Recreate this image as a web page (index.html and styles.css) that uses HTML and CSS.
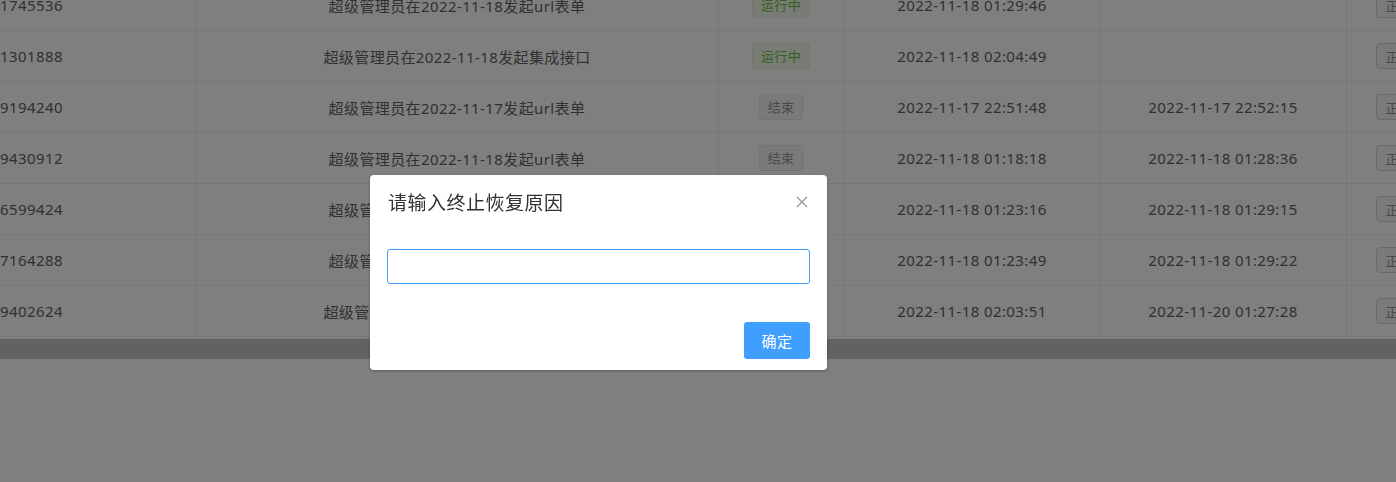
FILE: index.html
```html
<!DOCTYPE html>
<html lang="zh-CN">
<head>
    <meta charset="UTF-8">
    <title>流程列表</title>
    <link rel="stylesheet" href="styles.css">
</head>
<body>
    <div class="table-wrap">
        <table class="list-table">
            <colgroup>
                <col class="c-id"><col class="c-title"><col class="c-state"><col class="c-start"><col class="c-end"><col class="c-op">
            </colgroup>
            <tbody>
                <tr>
                    <td class="id">1745536</td>
                    <td>超级管理员在2022-11-18发起url表单</td>
                    <td><span class="tag tag-run">运行中</span></td>
                    <td>2022-11-18 01:29:46</td>
                    <td></td>
                    <td class="op"><button class="op-btn">正常</button></td>
                </tr>
                <tr>
                    <td class="id">1301888</td>
                    <td>超级管理员在2022-11-18发起集成接口</td>
                    <td><span class="tag tag-run">运行中</span></td>
                    <td>2022-11-18 02:04:49</td>
                    <td></td>
                    <td class="op"><button class="op-btn">正常</button></td>
                </tr>
                <tr>
                    <td class="id">9194240</td>
                    <td>超级管理员在2022-11-17发起url表单</td>
                    <td><span class="tag tag-end">结束</span></td>
                    <td>2022-11-17 22:51:48</td>
                    <td>2022-11-17 22:52:15</td>
                    <td class="op"><button class="op-btn">正常</button></td>
                </tr>
                <tr>
                    <td class="id">9430912</td>
                    <td>超级管理员在2022-11-18发起url表单</td>
                    <td><span class="tag tag-end">结束</span></td>
                    <td>2022-11-18 01:18:18</td>
                    <td>2022-11-18 01:28:36</td>
                    <td class="op"><button class="op-btn">正常</button></td>
                </tr>
                <tr>
                    <td class="id">6599424</td>
                    <td>超级管理员在2022-11-18发起url表单</td>
                    <td><span class="tag tag-end">结束</span></td>
                    <td>2022-11-18 01:23:16</td>
                    <td>2022-11-18 01:29:15</td>
                    <td class="op"><button class="op-btn">正常</button></td>
                </tr>
                <tr>
                    <td class="id">7164288</td>
                    <td>超级管理员在2022-11-18发起url表单</td>
                    <td><span class="tag tag-end">结束</span></td>
                    <td>2022-11-18 01:23:49</td>
                    <td>2022-11-18 01:29:22</td>
                    <td class="op"><button class="op-btn">正常</button></td>
                </tr>
                <tr>
                    <td class="id">9402624</td>
                    <td>超级管理员在2022-11-18发起集成接口</td>
                    <td><span class="tag tag-end">结束</span></td>
                    <td>2022-11-18 02:03:51</td>
                    <td>2022-11-20 01:27:28</td>
                    <td class="op"><button class="op-btn">正常</button></td>
                </tr>
            </tbody>
        </table>
        <div class="h-scroll"></div>
    </div>

    <div class="modal">
        <div class="dialog">
            <div class="dialog-header">
                <span class="dialog-title">请输入终止恢复原因</span>
                <button class="dialog-close">
                    <svg width="12" height="12" viewBox="0 0 12 12"><path d="M1 1L11 11M11 1L1 11" stroke="#909399" stroke-width="1.3" fill="none"/></svg>
                </button>
            </div>
            <div class="dialog-body">
                <input class="reason-input" type="text">
            </div>
            <div class="dialog-footer">
                <button class="ok-btn">确定</button>
            </div>
        </div>
    </div>
</body>
</html>
```

FILE: styles.css
```css
body{
    margin: 0;
    height: 100vh;
    overflow: hidden;
    background-color: #fff;
    font-family: "Noto Sans", "Noto Sans CJK SC", sans-serif;
    font-size: 15px;
    letter-spacing: 0.4px;
    color: #606266;
}
.table-wrap{
    overflow: hidden;
    margin-top: -21px;
}
.list-table{
    table-layout: fixed;
    border-collapse: collapse;
    width: 1460px;
}
.c-id{ width: 196px; }
.c-title{ width: 522px; }
.c-state{ width: 126px; }
.c-start{ width: 256px; }
.c-end{ width: 246px; }
.c-op{ width: 114px; }
.list-table td{
    height: 50px;
    padding: 0;
    text-align: center;
    border: 1px solid #ebeef5;
    white-space: nowrap;
    overflow: hidden;
}
.list-table tr td:first-child{
    border-left: none;
}
.list-table td.id{
    text-align: left;
}
.list-table td.op{
    text-align: left;
    padding-left: 29px;
}
.tag{
    display: inline-block;
    height: 26px;
    line-height: 24px;
    padding: 0 8px;
    font-size: 13px;
    letter-spacing: 0.3px;
    border-radius: 4px;
    border: 1px solid;
    box-sizing: border-box;
    vertical-align: middle;
}
.tag-run{
    background-color: #f0f9eb;
    border-color: #e1f3d8;
    color: #67c23a;
}
.tag-end{
    background-color: #f4f4f5;
    border-color: #e9e9eb;
    color: #909399;
}
.op-btn{
    height: 26px;
    padding: 0 9px;
    font-family: inherit;
    font-size: 13px;
    color: #909399;
    background-color: #f4f4f5;
    border: 1px solid #d3d4d6;
    border-radius: 4px;
    vertical-align: middle;
}
.h-scroll{
    height: 20px;
    margin-top: 2px;
    background-color: #c4c4c4;
}
.modal{
    position: fixed;
    top: 0;
    left: 0;
    right: 0;
    bottom: 0;
    background-color: rgba(0, 0, 0, 0.5);
    padding: 175px 0 0 370px;
}
.dialog{
    width: 457px;
    height: 195px;
    box-sizing: border-box;
    background-color: #fff;
    border-radius: 4px;
    box-shadow: 0 1px 3px rgba(0,0,0,0.3);
    padding: 0 17px;
}
.dialog-header{
    display: flex;
    justify-content: space-between;
    align-items: center;
    padding-top: 13px;
    height: 28px;
}
.dialog-title{
    font-size: 19px;
    letter-spacing: 0.5px;
    color: #303133;
    padding-left: 1px;
}
.dialog-close{
    border: none;
    background: none;
    padding: 0;
    margin-right: 2px;
    display: flex;
}
.dialog-body{
    padding-top: 33px;
}
.reason-input{
    display: block;
    width: 100%;
    height: 35px;
    box-sizing: border-box;
    border: 1px solid #409eff;
    border-radius: 3px;
    outline: none;
    padding: 0 15px;
}
.dialog-footer{
    display: flex;
    justify-content: flex-end;
    padding-top: 38px;
}
.ok-btn{
    width: 66px;
    height: 37px;
    border: none;
    border-radius: 3px;
    background-color: #409eff;
    color: #fff;
    font-family: inherit;
    font-size: 15px;
    letter-spacing: 0.5px;
}
```
